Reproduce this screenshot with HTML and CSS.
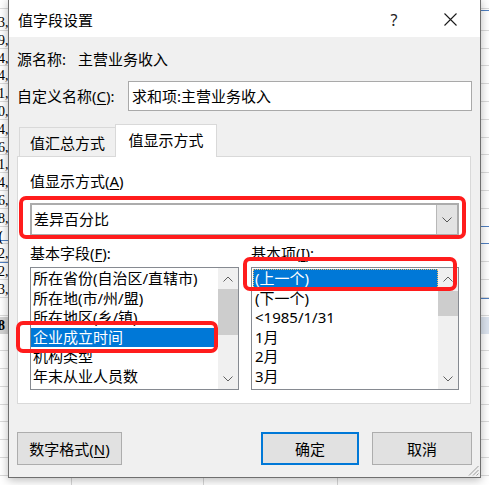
FILE: index.html
```html
<!DOCTYPE html>
<html lang="zh-CN">
<head>
<meta charset="utf-8">
<title>值字段设置</title>
<link rel="stylesheet" href="styles.css">
</head>
<body>
<div class="sheet">
  <div class="nums">
    <div>3,</div><div>9,</div><div>4,</div><div>4,</div><div>1,</div><div>0,</div>
    <div>4,</div><div>6,</div><div>1,</div><div>4,</div><div>6,</div><div>8,</div>
    <div class="b">(</div><div>2,</div><div>2,</div><div>3,</div><div></div><div class="b sel">8</div>
  </div>
</div>

<div class="dialog">
  <div class="titlebar">
    <span class="title">值字段设置</span>
    <span class="help">?</span>
    <span class="close"><svg width="13" height="13" viewBox="0 0 13 13"><path d="M0.5 0.5 L12.5 12.5 M12.5 0.5 L0.5 12.5" stroke="#1a1a1a" stroke-width="1.1" fill="none"/></svg></span>
  </div>
  <div class="content">
    <div class="src"><span class="src-k">源名称:</span><span>主营业务收入</span></div>
    <div class="custom">
      <span class="custom-k">自定义名称(<u>C</u>):</span>
      <div class="input">求和项:主营业务收入</div>
    </div>
    <div class="tabs">
      <div class="tab">值汇总方式</div>
      <div class="tab active">值显示方式</div>
    </div>
    <div class="panel">
      <div class="lbl">值显示方式(<u>A</u>)</div>
      <div class="combo">
        <span class="combo-text">差异百分比</span>
        <span class="combo-btn"><svg width="10" height="6" viewBox="0 0 10 6"><path d="M0.5 0.5 L5 5 L9.5 0.5" stroke="#555" stroke-width="1" fill="none"/></svg></span>
      </div>
      <div class="lists">
        <div class="col">
          <div class="lbl">基本字段(<u>F</u>):</div>
          <div class="listbox">
            <div class="items">
              <div class="item">所在省份(自治区/直辖市)</div>
              <div class="item">所在地(市/州/盟)</div>
              <div class="item">所在地区(乡/镇)</div>
              <div class="item selected">企业成立时间</div>
              <div class="item">机构类型</div>
              <div class="item">年末从业人员数</div>
            </div>
            <div class="sbar">
              <span class="arrow"><svg width="10" height="6" viewBox="0 0 10 6"><path d="M0.5 5.5 L5 1 L9.5 5.5" stroke="#606060" stroke-width="1" fill="none"/></svg></span>
              <span class="thumb thumb-l"></span>
              <span class="sfill"></span>
              <span class="arrow"><svg width="10" height="6" viewBox="0 0 10 6"><path d="M0.5 0.5 L5 5 L9.5 0.5" stroke="#606060" stroke-width="1" fill="none"/></svg></span>
            </div>
          </div>
        </div>
        <div class="col">
          <div class="lbl">基本项(<u>I</u>):</div>
          <div class="listbox">
            <div class="items items-r">
              <div class="item selected focus">(上一个)</div>
              <div class="item">(下一个)</div>
              <div class="item">&lt;1985/1/31</div>
              <div class="item">1月</div>
              <div class="item">2月</div>
              <div class="item">3月</div>
            </div>
            <div class="sbar">
              <span class="arrow"><svg width="10" height="6" viewBox="0 0 10 6"><path d="M0.5 5.5 L5 1 L9.5 5.5" stroke="#606060" stroke-width="1" fill="none"/></svg></span>
              <span class="thumb thumb-r"></span>
              <span class="sfill"></span>
              <span class="arrow"><svg width="10" height="6" viewBox="0 0 10 6"><path d="M0.5 0.5 L5 5 L9.5 0.5" stroke="#606060" stroke-width="1" fill="none"/></svg></span>
            </div>
          </div>
        </div>
      </div>
    </div>
    <div class="buttons">
      <div class="btn btn-fmt">数字格式(<u>N</u>)</div>
      <div class="spacer"></div>
      <div class="btn btn-ok">确定</div>
      <div class="btn btn-cancel">取消</div>
    </div>
  </div>
  <svg class="grip" width="11" height="11" viewBox="0 0 11 11"><path d="M10.5 1 L1 10.5 M10.5 5 L5 10.5 M10.5 8.5 L8.5 10.5" stroke="#9a9a9a" stroke-width="1" fill="none"/></svg>
</div>

<div class="mark m1"></div>
<div class="mark m2"></div>
<div class="mark m3"></div>
</body>
</html>
```

FILE: styles.css
```css
* { box-sizing: border-box; }
html, body { margin: 0; padding: 0; }
body {
  width: 489px;
  height: 485px;
  overflow: hidden;
  position: relative;
  background-color: #fff;
  background-image:
    linear-gradient(#4f7fc0, #4f7fc0),
    linear-gradient(#4f7fc0, #4f7fc0),
    linear-gradient(#4f7fc0, #4f7fc0),
    linear-gradient(#4f7fc0, #4f7fc0),
    linear-gradient(#dbe3ee, #dbe3ee),
    linear-gradient(#4f7fc0, #4f7fc0),
    linear-gradient(#4f7fc0, #4f7fc0),
    linear-gradient(to right, transparent 71px, #d6d6d6 71px, #d6d6d6 72px, transparent 72px),
    linear-gradient(to right, transparent 203px, #d6d6d6 203px, #d6d6d6 204px, transparent 204px),
    linear-gradient(to right, transparent 337px, #d6d6d6 337px, #d6d6d6 338px, transparent 338px),
    repeating-linear-gradient(to bottom, transparent 0, transparent 16.8px, #dadada 16.8px, #dadada 17.8px);
  background-repeat: no-repeat, no-repeat, no-repeat, no-repeat, no-repeat, no-repeat, no-repeat,
    no-repeat, no-repeat, no-repeat, repeat;
  background-size: 9px 1px, 9px 1px, 9px 1px, 9px 1px, 9px 17px, 9px 1px, 9px 1px,
    auto, auto, auto, auto;
  background-position: 481px 10px, 481px 226px, 481px 243px, 481px 298px, 481px 317px,
    0 240px, 0 262px,
    0 0, 0 0, 0 0, 0 13px;
  font-family: "Noto Sans", "Noto Sans CJK SC", sans-serif;
  font-size: 15px;
  color: #000;
}
u { text-decoration: underline; text-underline-offset: 2px; }

/* spreadsheet behind the dialog */
.sheet { padding-top: 14px; }
.nums { margin-left: -2px; font-family: "Liberation Serif", serif; font-size: 14px; }
.nums div { height: 17.8px; line-height: 17.8px; }
.nums .b { font-weight: bold; }
.nums .sel { background: #d2d2d2; width: 10px; }

/* dialog window */
.dialog {
  position: absolute;
  left: 8px;
  top: -1px;
  width: 473px;
  height: 479px;
  border: 1px solid #6f6f6f;
  background: #f0f0f0;
  box-shadow: 0 2px 9px rgba(0, 0, 0, 0.28);
  display: flex;
  flex-direction: column;
}
.titlebar {
  height: 37px;
  flex: none;
  background: #fff;
  display: flex;
  align-items: center;
  padding: 2px 0 0 9px;
  line-height: 20px;
}
.title { flex: 1; }
.help { width: 56px; text-align: center; color: #222; font-family: "Noto Sans", sans-serif; font-size: 16px; }
.close { width: 56px; margin-right: 2px; display: flex; justify-content: center; align-items: center; }

.content { flex: 1; padding: 12px 8px 0 8px; }
.src { display: flex; height: 20px; line-height: 20px; }
.src-k { width: 61px; }
.custom { display: flex; align-items: center; margin-top: 12px; }
.custom-k { width: 111px; line-height: 20px; }
.input {
  width: 344px;
  height: 30px;
  border: 1px solid #a9a9a9;
  background: #fff;
  padding-left: 3px;
  line-height: 28px;
}

.tabs {
  display: flex;
  align-items: flex-end;
  height: 33px;
  margin-top: 13px;
  margin-bottom: -1px;
  padding-left: 2px;
  position: relative;
  z-index: 1;
}
.tab {
  width: 96px;
  height: 30px;
  border: 1px solid #d9d9d9;
  border-right: none;
  background: #f0f0f0;
  text-align: center;
  line-height: 29px;
  padding-top: 1px;
}
.tab.active {
  width: 102px;
  height: 33px;
  border-right: 1px solid #d9d9d9;
  border-bottom: none;
  background: #fff;
  line-height: 31px;
  padding-top: 0;
}
.panel {
  background: #fff;
  border: 1px solid #d9d9d9;
  margin-right: 1px;
  padding: 14px 11px 13px 12px;
}
.lbl { height: 20px; line-height: 20px; }
.combo {
  margin-top: 12px;
  height: 33px;
  border: 2px solid #acacac;
  display: flex;
  background: #fff;
}
.combo-text { flex: 1; padding-left: 2px; line-height: 29px; }
.combo-btn {
  width: 21px;
  background: #e3e3e3;
  border-left: 1px solid #b8b8b8;
  display: flex;
  align-items: center;
  justify-content: center;
}

.lists {
  display: grid;
  grid-template-columns: 209px 208px;
  column-gap: 12px;
  margin-top: 7px;
}
.listbox {
  margin-top: 4px;
  height: 123px;
  border: 1px solid #868a91;
  background: #fff;
  display: flex;
}
.items { flex: 1; overflow: hidden; padding-top: 1px; }
.items-r { padding-left: 1px; }
.item {
  height: 19.6px;
  line-height: 19.6px;
  padding-left: 2px;
  white-space: nowrap;
}
.item.selected { background: #0078d7; color: #fff; }
.item.focus { outline: 1px dotted #f6c26b; outline-offset: -1px; }
.sbar {
  width: 20px;
  background: #f0f0f0;
  display: flex;
  flex-direction: column;
}
.arrow { height: 21px; display: flex; align-items: center; justify-content: center; flex: none; }
.thumb { background: #cdcdcd; flex: none; }
.thumb-l { height: 46px; }
.thumb-r { height: 25px; margin-top: 2px; }
.sfill { flex: 1; }

.buttons { display: flex; margin-top: 28px; }
.btn {
  height: 33px;
  background: #e1e1e1;
  border: 1px solid #adadad;
  display: flex;
  align-items: center;
  justify-content: center;
}
.btn-fmt { width: 105px; }
.spacer { flex: 1; }
.btn-ok { width: 98px; border: 2px solid #0078d7; margin-right: 13px; }
.btn-cancel { width: 100px; }

.grip { position: absolute; right: 1px; bottom: 1px; }

/* red annotation frames */
.mark {
  position: absolute;
  border: 4px solid #ff1c1c;
  border-radius: 7px;
}
.m1 { left: 19px; top: 196px; width: 447px; height: 43px; }
.m2 { left: 16px; top: 321px; width: 202px; height: 32px; }
.m3 { left: 243px; top: 257px; width: 214px; height: 34px; }
```
